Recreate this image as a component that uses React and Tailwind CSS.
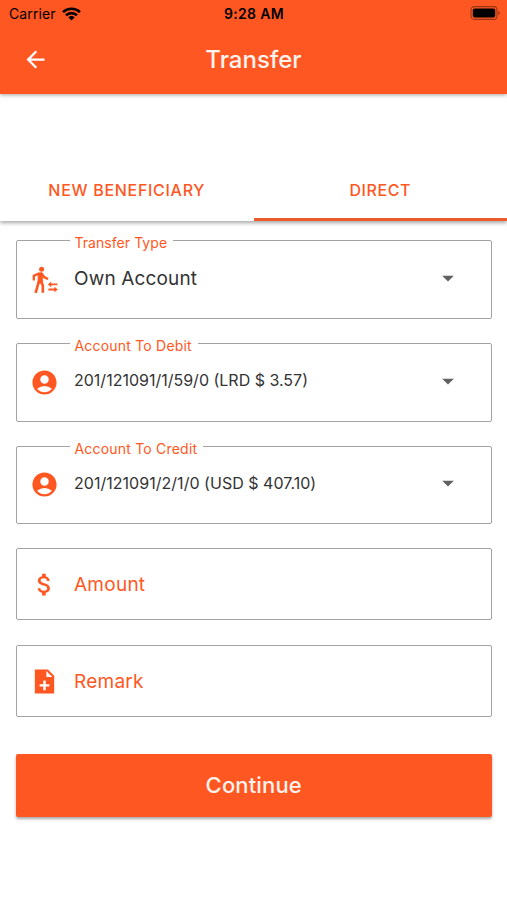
import React from 'react';
import {
  MdAccountCircle,
  MdArrowBack,
  MdArrowDropDown,
  MdAttachMoney,
} from 'react-icons/md';

const WalkTransferIcon = ({ className }) => (
  <svg className={className} width="29" height="29" viewBox="0 0 29 29" fill="none" stroke="currentColor">
    <circle cx="11.6" cy="4.2" r="2.5" fill="currentColor" stroke="none" />
    <path d="M8.2 8.2L12 7.6L12.8 17.2L8 18.6Z" fill="currentColor" strokeWidth="0.8" />
    <path d="M3.8 15.4V10.8L9.3 8.4" strokeWidth="2.3" />
    <path d="M11.6 8.2C12.8 11.2 14.8 13.2 18.2 13.9" strokeWidth="2.4" />
    <path d="M9 16L5.6 27.8" strokeWidth="2.6" />
    <path d="M10.6 16.4L12.8 20V27.8" strokeWidth="2.6" />
    <path d="M20 19.4H27.4M18.4 24.5H25.6" strokeWidth="1.8" />
    <path d="M17.8 19.4L21.2 16.6V22.2ZM27.8 24.5L24.4 21.7V27.3Z" fill="currentColor" stroke="none" />
  </svg>
);

const NoteAddIcon = ({ className }) => (
  <svg className={className} width="29" height="29" viewBox="0 0 24 24" fill="currentColor">
    <path d="M14.8 2H4v20h16V7.2zM16 16.2h-3v3h-2v-3H8v-2h3v-3h2v3h3zM13.6 8.3V3.4L18.5 8.3z" />
  </svg>
);

const selects = [
  { label: 'Transfer Type', value: 'Own Account', icon: WalkTransferIcon, valueClass: 'text-[19px] tracking-[0.15px] pb-[1px]', labelClass: 'tracking-[0.05px]' },
  { label: 'Account To Debit', value: '201/121091/1/59/0 (LRD $ 3.57)', icon: MdAccountCircle, valueClass: 'text-[16px] pb-[4px]', labelClass: 'tracking-[0.2px]' },
  { label: 'Account To Credit', value: '201/121091/2/1/0 (USD $ 407.10)', icon: MdAccountCircle, valueClass: 'text-[16px] tracking-[0.03px] pb-[3px]', labelClass: 'tracking-[0.2px]' },
];

const inputs = [
  { label: 'Amount', icon: MdAttachMoney },
  { label: 'Remark', icon: NoteAddIcon },
];

const StatusBar = () => (
  <div className="grid grid-cols-[1fr_auto_1fr] items-center h-7 pl-[9px] pr-[8px] text-black">
    <div className="flex items-center gap-[6px]">
      <span className="text-[14px] leading-none tracking-[0.1px]">Carrier</span>
      <svg className="mb-[1px]" width="19" height="14" viewBox="0 0 19 14" fill="none" stroke="currentColor" strokeWidth="2.6">
        <path d="M1 5.1C5.8 0.6 13.2 0.6 18 5.1" />
        <path d="M4 8.3C7.1 5.4 11.9 5.4 15 8.3" />
        <path d="M9.5 13.4L6.3 10.2C8.1 8.6 10.9 8.6 12.7 10.2Z" fill="currentColor" stroke="none" />
      </svg>
    </div>
    <span className="text-center text-[14px] leading-none font-semibold tracking-[0.35px]">9:28 AM</span>
    <svg className="justify-self-end -mr-[2px] mb-[2px]" width="31" height="14" viewBox="0 0 31 14">
      <rect x="1" y="0.6" width="26" height="12.8" rx="3.4" fill="none" stroke="#000" strokeOpacity="0.4" strokeWidth="1.1" />
      <rect x="2.8" y="2.4" width="22.4" height="9.2" rx="1.8" fill="#000" />
      <path d="M28.4 4.9C30.3 5.6 30.3 8.4 28.4 9.1Z" fill="#000" fillOpacity="0.4" />
    </svg>
  </div>
);

const SelectField = ({ label, value, icon: Icon, valueClass, labelClass }) => (
  <div className="relative flex items-center h-[78.75px] pl-[13px] pr-[29px] border border-[#a3a3a3] rounded-[2px]">
    <span className={`absolute -top-[6px] left-[53px] pl-[5px] pr-[6px] bg-white text-[14px] leading-4 text-[#ff5722] ${labelClass}`}>
      {label}
    </span>
    <Icon size={29} className="shrink-0 text-[#ff5722]" />
    <span className={`flex-1 ml-[15.5px] leading-6 text-[#333333] ${valueClass}`}>{value}</span>
    <MdArrowDropDown size={28} className="mb-[3px] text-[#616161]" />
  </div>
);

const InputField = ({ label, icon: Icon }) => (
  <div className="flex items-center h-[72px] pl-[13px] border border-[#a3a3a3] rounded-[2px]">
    <Icon size={29} className="shrink-0 text-[#ff5722]" />
    <span className="ml-[15.5px] pt-[2px] text-[19px] leading-6 tracking-[0.25px] text-[#ff5722]">{label}</span>
  </div>
);

const App = () => {
  return (
    <div className="min-h-screen w-full bg-white font-['Inter',sans-serif]">
      <header className="h-[94px] bg-[#ff5722] shadow-[0_1px_4px_rgba(0,0,0,0.35)]">
        <StatusBar />
        <div className="grid grid-cols-[1fr_auto_1fr] items-center h-16 px-[22px]">
          <MdArrowBack size={27} className="mb-[1px] text-white" />
          <h1 className="text-[24px] leading-7 font-medium text-[#fff3ee]">Transfer</h1>
        </div>
      </header>

      {/* Tabs */}
      <nav className="grid grid-cols-2 h-[62px] mt-[65px] text-center text-[16px] font-medium leading-[62px] text-[#ff5722] bg-white shadow-[0_2px_4px_rgba(0,0,0,0.35)] [clip-path:inset(0_0_-12px_0)]">
        <div className="h-[62px] tracking-[0.7px]">NEW BENEFICIARY</div>
        <div className="h-[62px] border-b-[3px] border-[#ef5a2c] tracking-[0.6px]">DIRECT</div>
      </nav>

      <main className="flex flex-col pl-[15.5px] pr-[15px] pt-[19px]">
        <div className="flex flex-col gap-6">
          {selects.map((field) => (
            <SelectField key={field.label} {...field} />
          ))}
          <div className="flex flex-col gap-[25px]">
            {inputs.map((field) => (
              <InputField key={field.label} {...field} />
            ))}
          </div>
        </div>
        <button className="h-[63.5px] mt-[36.5px] rounded-[2px] bg-[#ff5722] text-[22px] font-medium tracking-[0.15px] text-[#fff3ee] shadow-[0_2px_3px_rgba(0,0,0,0.35)]">
          Continue
        </button>
      </main>
    </div>
  );
};

export default App;
